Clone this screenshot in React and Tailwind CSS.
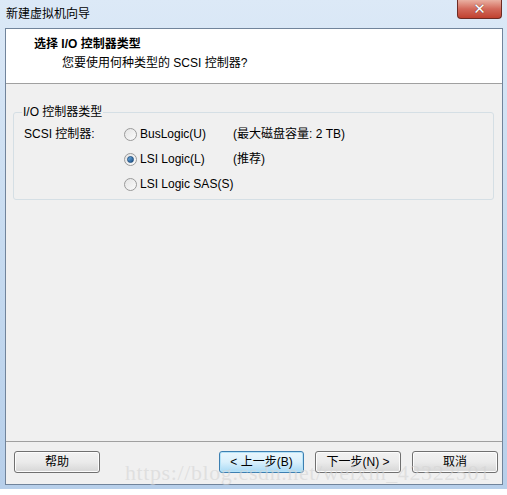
import { useState } from "react";

const font = "font-['Liberation_Sans','Noto_Sans_CJK_SC',sans-serif]";

function Radio({ checked, onClick }) {
  return (
    <span
      onClick={onClick}
      className="relative inline-flex w-[13px] h-[13px] rounded-full border border-[#9a9a9a] bg-gradient-to-br from-[#e4e4e4] to-[#fbfbfb] items-center justify-center shrink-0"
    >
      {checked && (
        <span className="w-[7px] h-[7px] rounded-full bg-gradient-to-br from-[#6fb2e6] to-[#1c4f86] border border-[#1f4e7e]" />
      )}
    </span>
  );
}

function Btn({ children, primary }) {
  return (
    <button
      className={`h-[22px] rounded-[3px] border text-[12px] text-black whitespace-nowrap ${
        primary
          ? "w-[85px] border-[#3c7fb1] bg-gradient-to-b from-[#eaf6fd] via-[#d9f0fc] to-[#a7d9f5] shadow-[inset_0_0_0_1px_#b6e3f8]"
          : "w-[86px] border-[#707070] bg-gradient-to-b from-[#f2f2f2] via-[#ebebeb] to-[#d6d6d6] shadow-[inset_0_0_0_1px_#fcfcfc]"
      }`}
    >
      {children}
    </button>
  );
}

export default function App() {
  const [ctrl, setCtrl] = useState(1);
  const options = [
    { label: "BusLogic(U)", note: "(最大磁盘容量: 2 TB)" },
    { label: "LSI Logic(L)", note: "(推荐)" },
    { label: "LSI Logic SAS(S)", note: "" },
  ];

  return (
    <div className={`w-[507px] h-[495px] bg-white ${font} text-[12px] text-black overflow-hidden`}>
      <div className="w-[507px] h-[489px] bg-gradient-to-b from-[#dce9f7] via-[#c7dbf0] to-[#b7cfea] flex flex-col">
        {/* title bar */}
        <div className="h-[28px] flex items-start justify-between pl-[6px] pr-[5px]">
          <span className="mt-[6px] leading-[16px] text-[12px]">新建虚拟机向导</span>
          <div className="w-[45px] h-[19px] rounded-b-[4px] border border-t-0 border-[#6d2b24] bg-gradient-to-b from-[#e9b0a2] via-[#d2685a] to-[#c0412f] flex items-center justify-center">
            <span className="text-white font-bold text-[15px] leading-none font-['DejaVu_Sans',sans-serif] [text-shadow:0_0_1px_#3d1a15]">
              ✕
            </span>
          </div>
        </div>

        {/* content panel */}
        <div className="ml-[5px] mr-[4px] h-[457px] border border-[#71849b] bg-[#f0f0f0] flex flex-col">
          <div className="h-[55px] bg-white border-b border-[#a0a0a0] pt-[6px]">
            <div className="pl-[28px] font-bold leading-[18px]">选择 I/O 控制器类型</div>
            <div className="pl-[56px] leading-[18px] mt-[1px]">您要使用何种类型的 SCSI 控制器?</div>
          </div>

          <div className="flex-1 px-[7px] pt-[21px]">
            <fieldset className="w-[481px] h-[95px] border border-[#d5dfe5] rounded-[3px] pl-[10px]">
              <legend className="px-[1px] -ml-[2px] leading-[14px]">I/O 控制器类型</legend>
              <div className="flex mt-[7px]">
                <div className="w-[100px] leading-[16px] whitespace-nowrap">SCSI 控制器:</div>
                <div className="flex flex-col gap-[9px]">
                  {options.map((o, i) => (
                    <div key={o.label} className="flex items-center h-[16px] whitespace-nowrap">
                      <span className="w-[16px] flex">
                        <Radio checked={ctrl === i} onClick={() => setCtrl(i)} />
                      </span>
                      <span className="w-[93px]">{o.label}</span>
                      <span>{o.note}</span>
                    </div>
                  ))}
                </div>
              </div>
            </fieldset>
          </div>

          {/* footer */}
          <div className="relative border-t border-[#a0a0a0] h-[43px] pl-[8px] pr-[4px] pt-[9px] flex">
            <Btn>帮助</Btn>
            <div className="ml-auto flex gap-[11px]">
              <Btn primary>&lt; 上一步(B)</Btn>
              <Btn>下一步(N) &gt;</Btn>
              <Btn>取消</Btn>
            </div>
            <span className="absolute left-[119px] top-[14px] text-[22px] tracking-[0.6px] text-[#d4d4d4]/60 font-['Liberation_Serif',serif] pointer-events-none whitespace-nowrap">
              https://blog.csdn.net/weixin_42322501
            </span>
          </div>
        </div>
      </div>
    </div>
  );
}
